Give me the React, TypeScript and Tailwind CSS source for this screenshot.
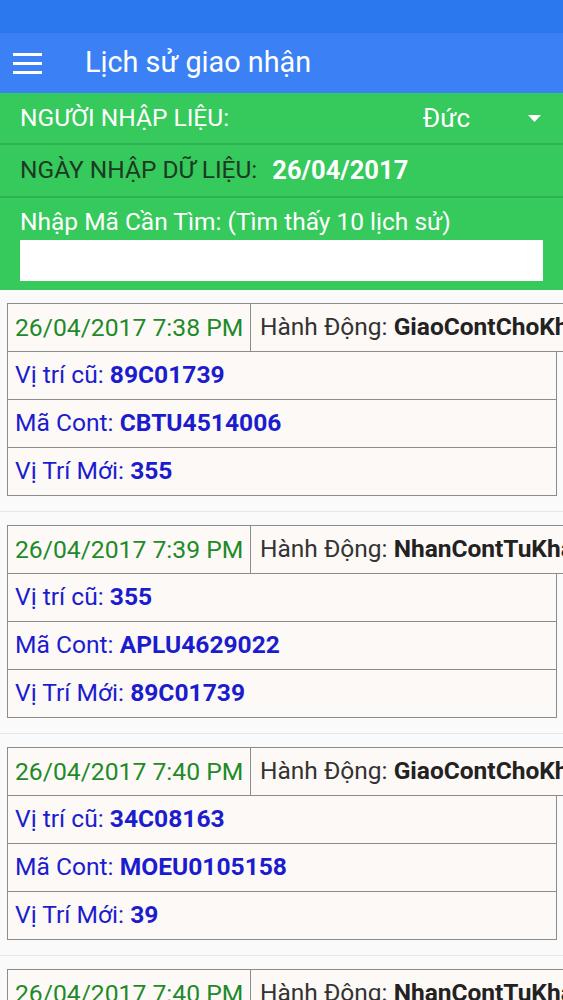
const records = [
  { time: "26/04/2017 7:38 PM", action: "GiaoContChoKhach", oldPos: "89C01739", cont: "CBTU4514006", newPos: "355" },
  { time: "26/04/2017 7:39 PM", action: "NhanContTuKhach", oldPos: "355", cont: "APLU4629022", newPos: "89C01739" },
  { time: "26/04/2017 7:40 PM", action: "GiaoContChoKhach", oldPos: "34C08163", cont: "MOEU0105158", newPos: "39" },
  { time: "26/04/2017 7:40 PM", action: "NhanContTuKhach", oldPos: "39", cont: "MOEU0105158", newPos: "34C08163" },
];

type RecordItem = (typeof records)[number];

const HistoryCard = ({ item }: { item: RecordItem }) => {
  return (
    <div className="overflow-hidden border-b border-[#e6e6e6] pt-[13px] pb-[15px] pl-[7px]">
      {/* header row runs past the screen edge */}
      <div className="flex w-max bg-[#fdf9f6]">
        <div className="flex h-[49px] w-[244px] items-center border border-[#8c8c8c] pl-[7px] text-[24.7px] text-[#1f8a2a]">
          {item.time}
        </div>
        <div className="flex h-[49px] items-center whitespace-nowrap border-y border-r border-[#8c8c8c] pl-[9px] pr-6 text-[24.5px] text-[#333]">
          Hành Động:&nbsp;<span className="font-bold text-[#222]">{item.action}</span>
        </div>
      </div>

      <div className="w-[550px] border-x border-b border-[#8c8c8c] bg-[#fdf9f6] text-[24.6px] text-[#1c1ccf]">
        <div className="flex h-[48px] items-center border-b border-[#8c8c8c] pl-[7px]">
          Vị trí cũ:&nbsp;<span className="font-bold">{item.oldPos}</span>
        </div>
        <div className="flex h-[48px] items-center border-b border-[#8c8c8c] pl-[7px]">
          Mã Cont:&nbsp;<span className="font-bold">{item.cont}</span>
        </div>
        <div className="flex h-[47px] items-center pl-[7px]">
          Vị Trí Mới:&nbsp;<span className="font-bold">{item.newPos}</span>
        </div>
      </div>
    </div>
  );
};

export default function App() {
  return (
    <div className="h-[1000px] w-[563px] overflow-hidden bg-[#fafafa] font-['Roboto',sans-serif]">
      {/* status bar */}
      <div className="h-[33px] bg-[#2b78ee]" />

      {/* app bar */}
      <div className="flex h-[60px] items-center bg-[#3b81f5] shadow-sm">
        <div className="ml-[13px] flex w-[29px] flex-col gap-[6px]">
          <span className="h-[3px] bg-white" />
          <span className="h-[3px] bg-white" />
          <span className="h-[3px] bg-white" />
        </div>
        <h1 className="ml-[43px] text-[28.8px] text-white">Lịch sử giao nhận</h1>
      </div>

      {/* filter panel */}
      <div className="bg-[#36c95c]">
        <div className="flex h-[52px] items-center justify-between border-b-2 border-[#2eb151] pl-[20px] pr-[22px]">
          <span className="text-[24.5px] text-white">NGƯỜI NHẬP LIỆU:</span>
          <div className="flex items-center gap-[58px]">
            <span className="text-[26px] text-white">Đức</span>
            <svg width="13" height="7" viewBox="0 0 13 7">
              <path d="M0 0h13L6.5 7z" fill="#fff" />
            </svg>
          </div>
        </div>
        <div className="flex h-[53px] items-center border-b-2 border-[#2eb151] pl-[20px]">
          <span className="text-[24.5px] text-[#1d3a22]">NGÀY NHẬP DỮ LIỆU:</span>
          <span className="ml-[15px] text-[25.5px] font-bold text-white">26/04/2017</span>
        </div>
        <div className="px-[20px] pt-[9px] pb-[9px]">
          <div className="text-[24.5px] leading-[30px] text-white">Nhập Mã Cần Tìm: (Tìm thấy 10 lịch sử)</div>
          <input className="mt-[3px] block h-[41px] w-[523px] bg-white outline-none" />
        </div>
      </div>

      {/* history list */}
      <div>
        {records.map((r, i) => (
          <HistoryCard key={i} item={r} />
        ))}
      </div>
    </div>
  );
}
